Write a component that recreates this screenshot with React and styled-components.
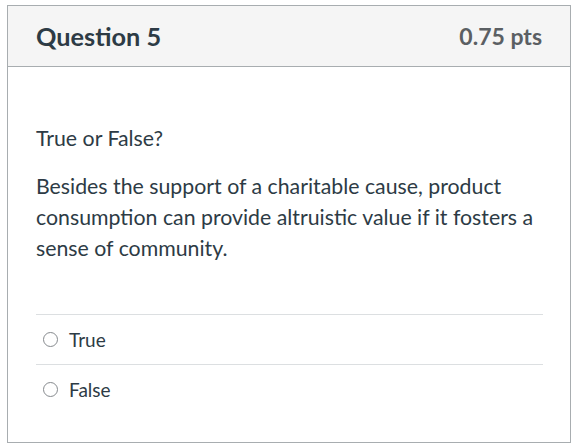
import React from 'react';
import styled, {createGlobalStyle} from "styled-components";

const GlobalStyle = createGlobalStyle`
    body {
        margin: 0;
        background: #fff;
        font-family: Lato, "Open Sans", sans-serif;
        color: #2d3b45;
    }
`;

const Page = styled.div`
    padding: 5px 9px 0 7px;
`;
const Card = styled.div`
    border: 1px solid #a8adb0;
    height: 436px;
    display: flex;
    flex-direction: column;
`;
const Header = styled.div`
    display: flex;
    align-items: center;
    justify-content: space-between;
    height: 60px;
    padding: 0 28px 0 28px;
    background: #f5f5f5;
    border-bottom: 1px solid #a8adb0;
`;
const Title = styled.div`
    font-size: 25.3px;
    font-weight: 700;
    color: #2d3b45;
`;
const Points = styled.div`
    font-size: 23px;
    font-weight: 700;
    color: #5b5f63;
`;
const Body = styled.div`
    padding: 56px 27px 0 28px;
`;
const Text = styled.p`
    margin: 0 0 17px;
    font-size: 21.3px;
    line-height: 31px;
`;
const Answers = styled.div`
    margin-top: 50px;
`;
const AnswerRow = styled.label`
    display: flex;
    align-items: center;
    gap: 11px;
    height: 49px;
    padding-left: 7px;
    border-top: 1px solid #dcdfe1;
    font-size: 19px;
    color: #2d3b45;
`;
const Radio = styled.span`
    width: 13px;
    height: 13px;
    border: 1px solid #868a8e;
    border-radius: 50%;
    flex: none;
`;

const answers = ['True', 'False'];

const App = () => {
    return (
        <Page>
            <GlobalStyle/>
            <Card>
                <Header>
                    <Title>Question 5</Title>
                    <Points>0.75 pts</Points>
                </Header>
                <Body>
                    <Text>True or False?</Text>
                    <Text>
                        Besides the support of a charitable cause, product consumption can provide altruistic value if it fosters a sense of community.
                    </Text>
                    <Answers>
                        {answers.map(answer => (
                            <AnswerRow key={answer}>
                                <Radio/>
                                {answer}
                            </AnswerRow>
                        ))}
                    </Answers>
                </Body>
            </Card>
        </Page>
    );
};

export default App;
